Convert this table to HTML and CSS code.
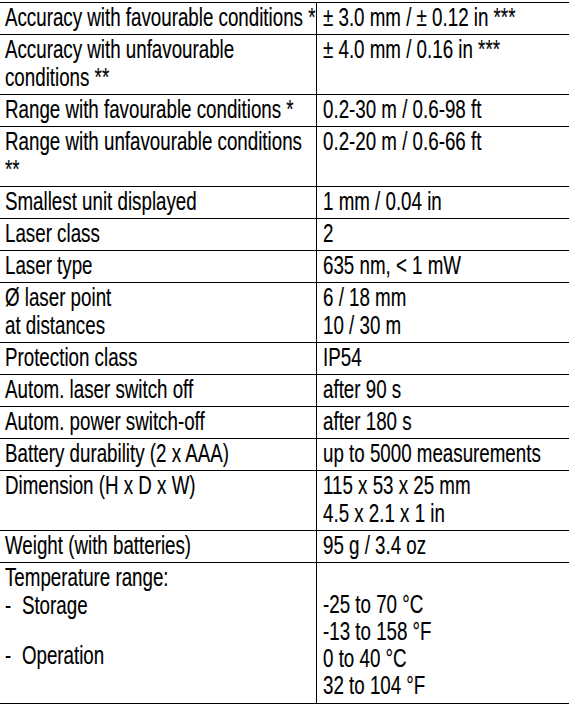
FILE: index.html
```html
<!DOCTYPE html>
<html>
<head>
<meta charset="utf-8">
<link rel="stylesheet" href="styles.css">
</head>
<body>
<table class="spec">
<colgroup><col class="ck"><col class="cv"></colgroup>
<tr><td><span class="t">Accuracy with favourable conditions *</span></td><td><span class="t">± 3.0 mm / ± 0.12 in ***</span></td></tr>
<tr><td><span class="t">Accuracy with unfavourable<br>conditions **</span></td><td><span class="t">± 4.0 mm / 0.16 in ***</span></td></tr>
<tr><td><span class="t">Range with favourable conditions *</span></td><td><span class="t">0.2-30 m / 0.6-98 ft</span></td></tr>
<tr><td><span class="t">Range with unfavourable conditions<br>**</span></td><td><span class="t">0.2-20 m / 0.6-66 ft</span></td></tr>
<tr><td><span class="t">Smallest unit displayed</span></td><td><span class="t">1 mm / 0.04 in</span></td></tr>
<tr><td><span class="t">Laser class</span></td><td><span class="t">2</span></td></tr>
<tr><td><span class="t">Laser type</span></td><td><span class="t">635 nm, &lt; 1 mW</span></td></tr>
<tr><td><span class="t">Ø laser point<br>at distances</span></td><td><span class="t">6 / 18 mm<br>10 / 30 m</span></td></tr>
<tr><td><span class="t">Protection class</span></td><td><span class="t">IP54</span></td></tr>
<tr><td><span class="t">Autom. laser switch off</span></td><td><span class="t">after 90 s</span></td></tr>
<tr><td><span class="t">Autom. power switch-off</span></td><td><span class="t">after 180 s</span></td></tr>
<tr><td><span class="t">Battery durability (2 x AAA)</span></td><td><span class="t">up to 5000 measurements</span></td></tr>
<tr><td><span class="t">Dimension (H x D x W)</span></td><td><span class="t">115 x 53 x 25 mm<br>4.5 x 2.1 x 1 in</span></td></tr>
<tr><td><span class="t">Weight (with batteries)</span></td><td><span class="t">95 g / 3.4 oz</span></td></tr>
<tr class="temp"><td><span class="t">Temperature range:<br><span class="dash">-</span>Storage<span class="gap"></span><span class="dash">-</span>Operation</span></td><td class="tv"><span class="t">&nbsp;<br>-25 to 70 °C<br>-13 to 158 °F<br>0 to 40 °C<br>32 to 104 °F</span></td></tr>
</table>
</body>
</html>
```
FILE: styles.css
```css
html, body {
  margin: 0;
  padding: 0;
  background: #fff;
  overflow: hidden;
}
.spec {
  border-collapse: collapse;
  margin: 2px 0 0 0;
  width: 569px;
  table-layout: fixed;
  font-family: "Liberation Sans", Arial, sans-serif;
  font-size: 25.5px;
  line-height: 28px;
  color: #000;
}
.ck { width: 316px; }
.spec td {
  border: 1px solid #000;
  padding: 0 4px 3px 6px;
  vertical-align: top;
  white-space: nowrap;
  overflow: hidden;
}
.spec td:first-child {
  border-left: none;
  padding-left: 5px;
  overflow: visible;
}
.spec td:last-child {
  border-right: none;
}
.t {
  display: inline-block;
  transform: scaleX(0.735);
  transform-origin: 0 0;
  -webkit-text-stroke: 0.15px #000;
}
.dash {
  display: inline-block;
  width: 23px;
}
.gap {
  display: block;
  height: 22px;
}
.temp td {
  padding-bottom: 4px;
}
.temp td.tv {
  line-height: 27px;
  padding-top: 1px;
}
```
